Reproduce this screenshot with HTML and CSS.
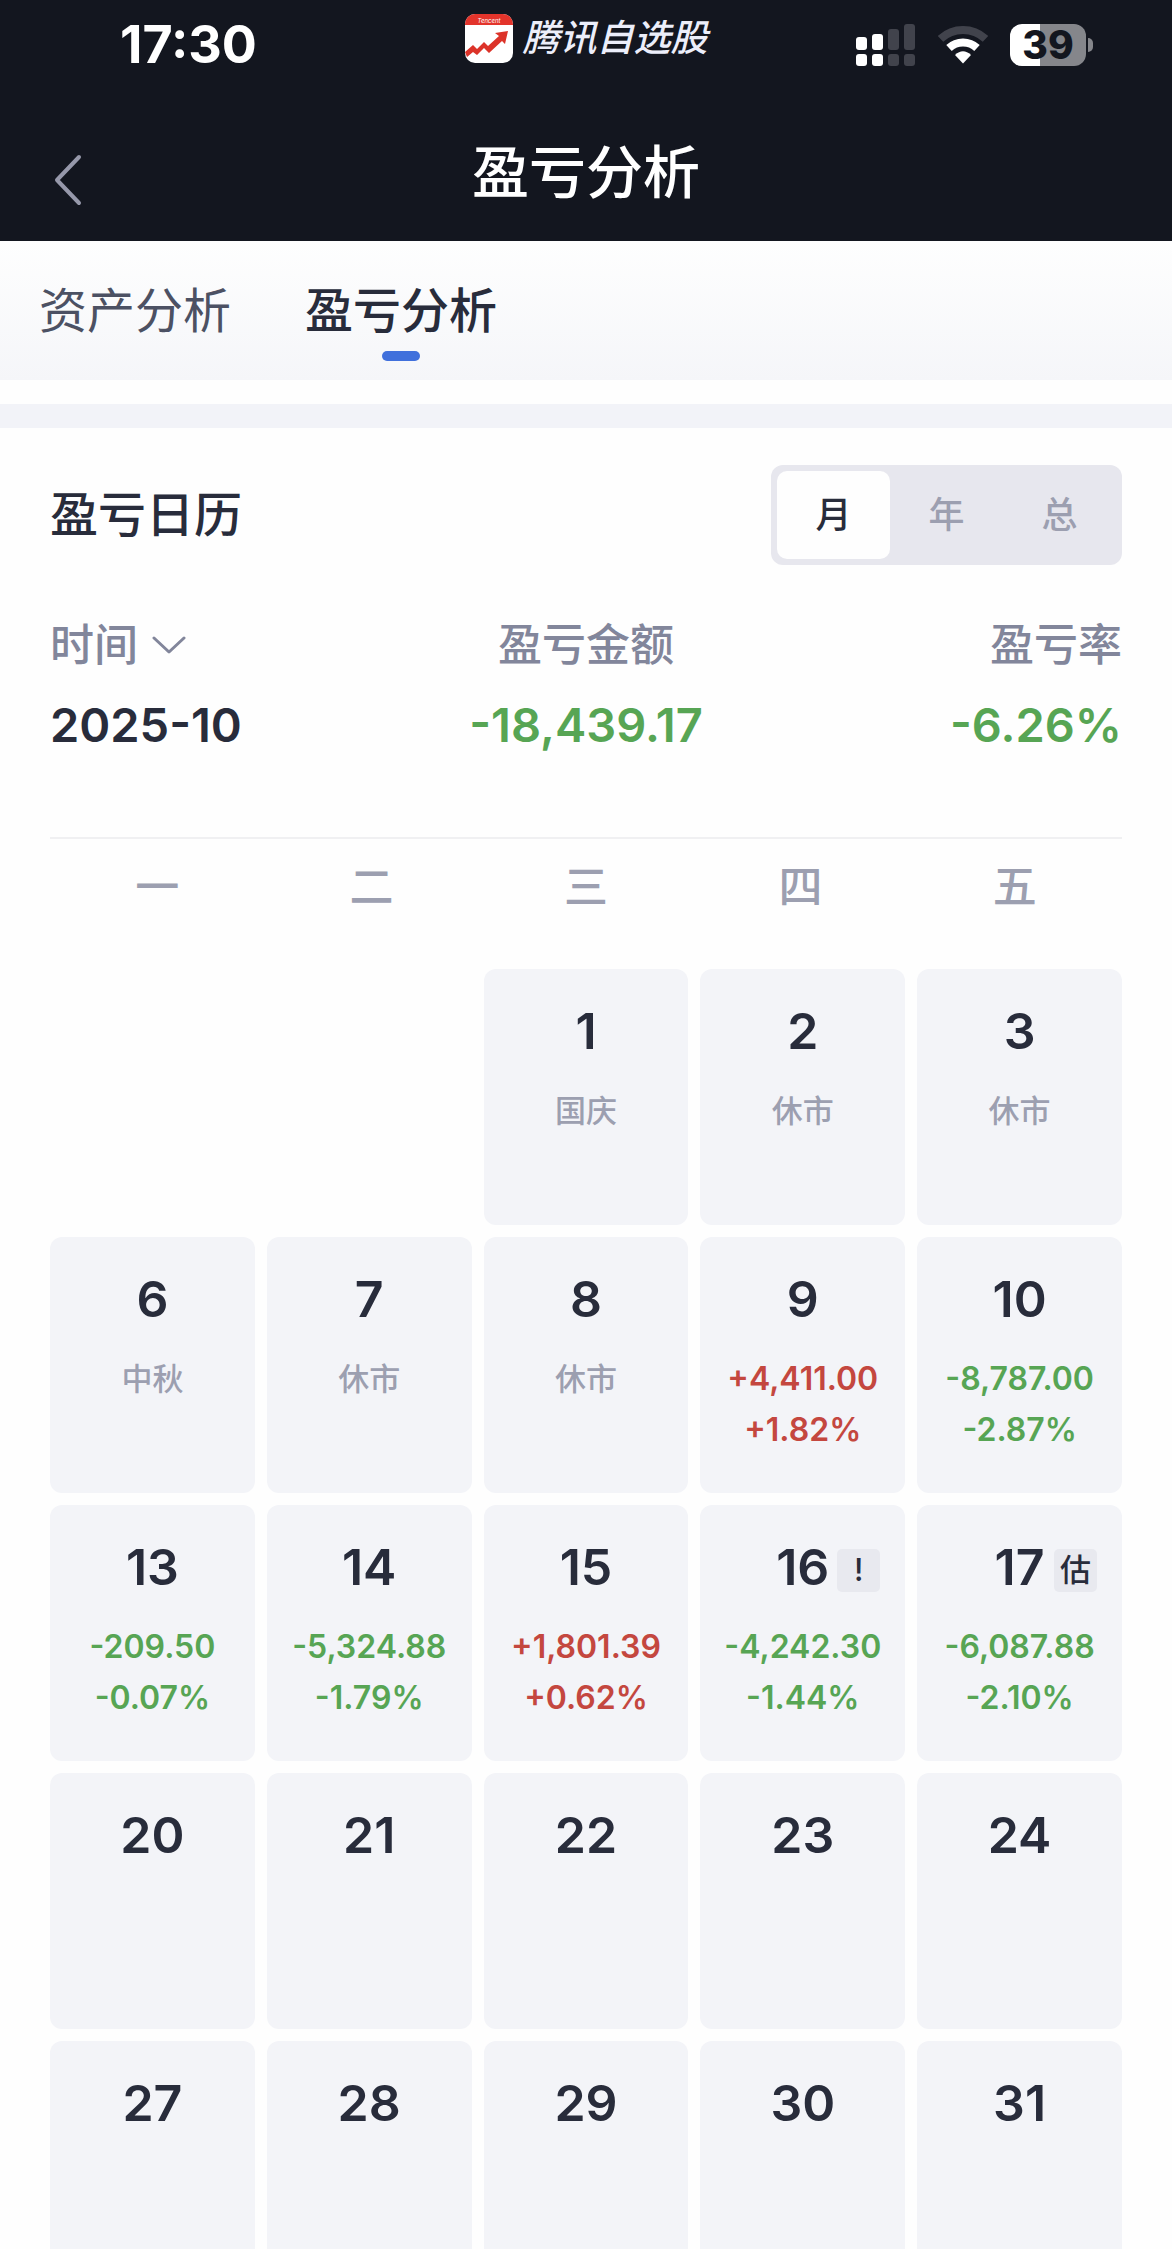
FILE: index.html
```
<!DOCTYPE html>
<html lang="zh-CN">
<head>
    <meta charset="UTF-8">
    <meta name="viewport" content="width=device-width, initial-scale=1.0">
    <title>盈亏分析</title>
    <link rel="stylesheet" href="styles.css">
</head>
<body>
    <header class="header">
        <!-- 状态栏 -->
        <div class="status-bar">
            <span class="status-time">17:30</span>
            <div class="brand">
                <svg class="brand-logo" viewBox="0 0 48 49" aria-hidden="true">
                    <rect width="48" height="49" rx="10" fill="#fff"/>
                    <path d="M0 11V10A10 10 0 0 1 10 0H38A10 10 0 0 1 48 10V11Z" fill="#e3342b"/>
                    <text x="24" y="9" text-anchor="middle" class="brand-tag">Tencent</text>
                    <path d="M0 38L8 31L12 35L19 28L23 32L34 22L30 19L43 17L40 30L37 27L24 39L19 34L12 41L8 38L2 43Z" fill="#dc3329"/>
                </svg>
                <span class="brand-name">腾讯自选股</span>
            </div>
            <div class="status-icons">
                <svg width="60" height="42" viewBox="0 0 60 42" aria-hidden="true">
                    <g fill="#fff">
                        <rect x="0" y="13" width="11" height="13" rx="3"/>
                        <rect x="16" y="10" width="11" height="16" rx="3"/>
                        <rect x="0" y="30" width="11" height="12" rx="3"/>
                        <rect x="16" y="30" width="11" height="12" rx="3"/>
                    </g>
                    <g fill="#41434c">
                        <rect x="32" y="5" width="11" height="21" rx="3"/>
                        <rect x="48" y="0" width="11" height="26" rx="3"/>
                        <rect x="32" y="30" width="11" height="12" rx="3"/>
                        <rect x="48" y="30" width="11" height="12" rx="3"/>
                    </g>
                </svg>
                <svg width="50" height="38" viewBox="0 0 50 38" fill="none" stroke-width="8" aria-hidden="true">
                    <path d="M2.5 12.9A33 33 0 0 1 47.5 12.9" stroke="#41434c"/>
                    <path d="M11 22A20.5 20.5 0 0 1 39 22" stroke="#fff"/>
                    <path d="M25 37.5L17 29Q25 21.5 33 29Z" fill="#fff"/>
                </svg>
                <div class="battery"><span class="battery-level">39</span></div>
            </div>
        </div>

        <!-- 标题栏 -->
        <div class="nav-bar">
            <button class="back-btn" type="button" aria-label="返回">
                <svg width="28" height="52" viewBox="0 0 28 52" aria-hidden="true">
                    <path d="M25 3L3 26L25 49" fill="none" stroke="#9698aa" stroke-width="4" stroke-linecap="round" stroke-linejoin="round"/>
                </svg>
            </button>
            <h1 class="nav-title">盈亏分析</h1>
        </div>
    </header>

    <main class="content">
        <nav class="tabs">
            <a class="tab" href="#assets">资产分析</a>
            <a class="tab active" href="#profit">盈亏分析</a>
        </nav>

        <section class="calendar-card" id="profit">
            <div class="card-head">
                <h2 class="card-title">盈亏日历</h2>
                <div class="segment">
                    <button class="segment-btn active" type="button">月</button>
                    <button class="segment-btn" type="button">年</button>
                    <button class="segment-btn" type="button">总</button>
                </div>
            </div>

            <div class="summary">
                <div class="summary-item">
                    <button class="summary-label" type="button">时间
                        <svg width="34" height="18" viewBox="0 0 34 18" aria-hidden="true">
                            <path d="M2 2L17 16L32 2" fill="none" stroke="#82869b" stroke-width="3" stroke-linecap="round" stroke-linejoin="round"/>
                        </svg>
                    </button>
                    <span class="summary-value">2025-10</span>
                </div>
                <div class="summary-item">
                    <span class="summary-label">盈亏金额</span>
                    <span class="summary-value down">-18,439.17</span>
                </div>
                <div class="summary-item">
                    <span class="summary-label">盈亏率</span>
                    <span class="summary-value down">-6.26%</span>
                </div>
            </div>

            <div class="weekdays">
                <span>一</span>
                <span>二</span>
                <span>三</span>
                <span>四</span>
                <span>五</span>
            </div>

            <ol class="days">
                <li class="day first"><b>1</b><span class="rest">国庆</span></li>
                <li class="day"><b>2</b><span class="rest">休市</span></li>
                <li class="day"><b>3</b><span class="rest">休市</span></li>

                <li class="day"><b>6</b><span class="rest">中秋</span></li>
                <li class="day"><b>7</b><span class="rest">休市</span></li>
                <li class="day"><b>8</b><span class="rest">休市</span></li>
                <li class="day"><b>9</b><span class="up">+4,411.00</span><span class="up">+1.82%</span></li>
                <li class="day"><b>10</b><span class="down">-8,787.00</span><span class="down">-2.87%</span></li>

                <li class="day"><b>13</b><span class="down">-209.50</span><span class="down">-0.07%</span></li>
                <li class="day"><b>14</b><span class="down">-5,324.88</span><span class="down">-1.79%</span></li>
                <li class="day"><b>15</b><span class="up">+1,801.39</span><span class="up">+0.62%</span></li>
                <li class="day"><b>16</b><i class="badge">!</i><span class="down">-4,242.30</span><span class="down">-1.44%</span></li>
                <li class="day"><b>17</b><i class="badge">估</i><span class="down">-6,087.88</span><span class="down">-2.10%</span></li>

                <li class="day"><b>20</b></li>
                <li class="day"><b>21</b></li>
                <li class="day"><b>22</b></li>
                <li class="day"><b>23</b></li>
                <li class="day"><b>24</b></li>

                <li class="day"><b>27</b></li>
                <li class="day"><b>28</b></li>
                <li class="day"><b>29</b></li>
                <li class="day"><b>30</b></li>
                <li class="day"><b>31</b></li>
            </ol>
        </section>
    </main>
</body>
</html>
```

FILE: styles.css
```
* {
    box-sizing: border-box;
    margin: 0;
    padding: 0;
}

body {
    display: flex;
    flex-direction: column;
    height: 100vh;
    font-family: Inter, "Noto Sans CJK SC", sans-serif;
    color: #282c3b;
    background: #fefefe;
}

button {
    border: none;
    background: none;
    font-family: inherit;
    cursor: pointer;
}

svg {
    display: block;
}

/* 顶部 */
.header {
    background: #13161f;
    color: #fff;
}

.status-bar {
    display: grid;
    grid-template-columns: 1fr auto 1fr;
    align-items: center;
    height: 90px;
    padding: 0 79px;
}

.status-time {
    padding-left: 41px;
    font-size: 52px;
    font-weight: 700;
    line-height: 60px;
}

.brand {
    display: flex;
    align-items: center;
    gap: 10px;
    padding-bottom: 14px;
}

.brand-logo {
    width: 48px;
    height: 49px;
}

.brand-tag {
    fill: #fff;
    font-size: 6px;
    font-style: italic;
}

.brand-name {
    color: #eceefa;
    font-size: 37px;
    font-style: italic;
    font-weight: 500;
    line-height: 48px;
}

.status-icons {
    display: flex;
    align-items: center;
    justify-content: flex-end;
    gap: 22px;
}

.battery {
    position: relative;
    width: 76px;
    height: 42px;
    margin-right: 7px;
    border-radius: 12px;
    background: linear-gradient(to right, #fff 39%, #85868b 39%);
    color: #13161f;
    text-align: center;
}

.battery::after {
    content: "";
    position: absolute;
    top: 14px;
    right: -7px;
    width: 5px;
    height: 14px;
    border-radius: 0 6px 6px 0;
    background: #85868b;
}

.battery-level {
    font-size: 39px;
    font-weight: 800;
    line-height: 42px;
}

.nav-bar {
    display: grid;
    grid-template-columns: 1fr auto 1fr;
    align-items: center;
    height: 151px;
    padding: 14px 54px 0;
}

.back-btn {
    justify-self: start;
    padding-top: 14px;
}

.nav-title {
    font-size: 57px;
    font-weight: 500;
    line-height: 72px;
}

.content {
    flex: 1;
    min-height: 0;
    overflow-y: auto;
    scrollbar-width: none;
}

/* 标签页 */
.tabs {
    display: flex;
    gap: 74px;
    height: 139px;
    padding: 34px 39px 0;
    background: linear-gradient(#fefefe, #f5f6f9);
}

.tab {
    position: relative;
    height: 86px;
    color: #4c5163;
    font-size: 48px;
    line-height: 72px;
    text-decoration: none;
}

.tab.active {
    color: #282c3b;
    font-weight: 500;
}

.tab.active::after {
    content: "";
    position: absolute;
    bottom: 0;
    left: 50%;
    width: 38px;
    height: 10px;
    margin-left: -19px;
    border-radius: 5px;
    background: #4070dc;
}

/* 盈亏日历 */
.calendar-card {
    margin-top: 24px;
    padding: 37px 50px 40px;
    border-top: 24px solid #f2f3f8;
}

.card-head {
    display: flex;
    align-items: center;
    justify-content: space-between;
}

.card-title {
    font-size: 48px;
    font-weight: 500;
    line-height: 72px;
}

.segment {
    display: flex;
    padding: 6px;
    border-radius: 12px;
    background: #e7e7ee;
}

.segment-btn {
    width: 113px;
    height: 88px;
    padding-bottom: 6px;
    border-radius: 10px;
    color: #9c9fb0;
    font-size: 36px;
    font-weight: 500;
}

.segment-btn.active {
    background: #fefefe;
    color: #282c3b;
}

.summary {
    display: grid;
    grid-template-columns: repeat(3, 1fr);
    padding: 48px 0 80px;
    border-bottom: 2px solid #f0f0f2;
}

.summary-item {
    display: flex;
    flex-direction: column;
    align-items: center;
    gap: 16px;
}

.summary-item:first-child {
    align-items: flex-start;
}

.summary-item:last-child {
    align-items: flex-end;
}

.summary-label {
    display: flex;
    align-items: center;
    gap: 14px;
    color: #82869b;
    font-size: 44px;
    font-weight: 500;
    line-height: 64px;
}

.summary-value {
    font-size: 47px;
    font-weight: 600;
    line-height: 64px;
}

.up {
    color: #c4473f;
}

.down {
    color: #57a554;
}

.weekdays {
    display: grid;
    grid-template-columns: repeat(5, 1fr);
    padding: 16px 0 50px;
    color: #9c9fb0;
    font-size: 44px;
    font-weight: 500;
    line-height: 64px;
    text-align: center;
}

.days {
    display: grid;
    grid-template-columns: repeat(5, 1fr);
    grid-auto-rows: 256px;
    gap: 12px;
    list-style: none;
}

.day {
    position: relative;
    display: flex;
    flex-direction: column;
    align-items: center;
    padding-top: 32px;
    border-radius: 12px;
    background: #f3f4f8;
    font-size: 32px;
    font-weight: 600;
    line-height: 51px;
}

/* 1 号是周三 */
.day.first {
    grid-column-start: 3;
}

.day b {
    margin-bottom: 24px;
    font-size: 50px;
    font-weight: 600;
    line-height: 60px;
}

.rest {
    color: #9c9fb0;
    font-size: 31px;
    font-weight: 500;
}

.badge {
    position: absolute;
    top: 44px;
    right: 25px;
    width: 43px;
    height: 43px;
    border-radius: 5px;
    background: #e8e9ef;
    font-size: 31px;
    font-style: normal;
    font-weight: 500;
    line-height: 41px;
    text-align: center;
}
```
